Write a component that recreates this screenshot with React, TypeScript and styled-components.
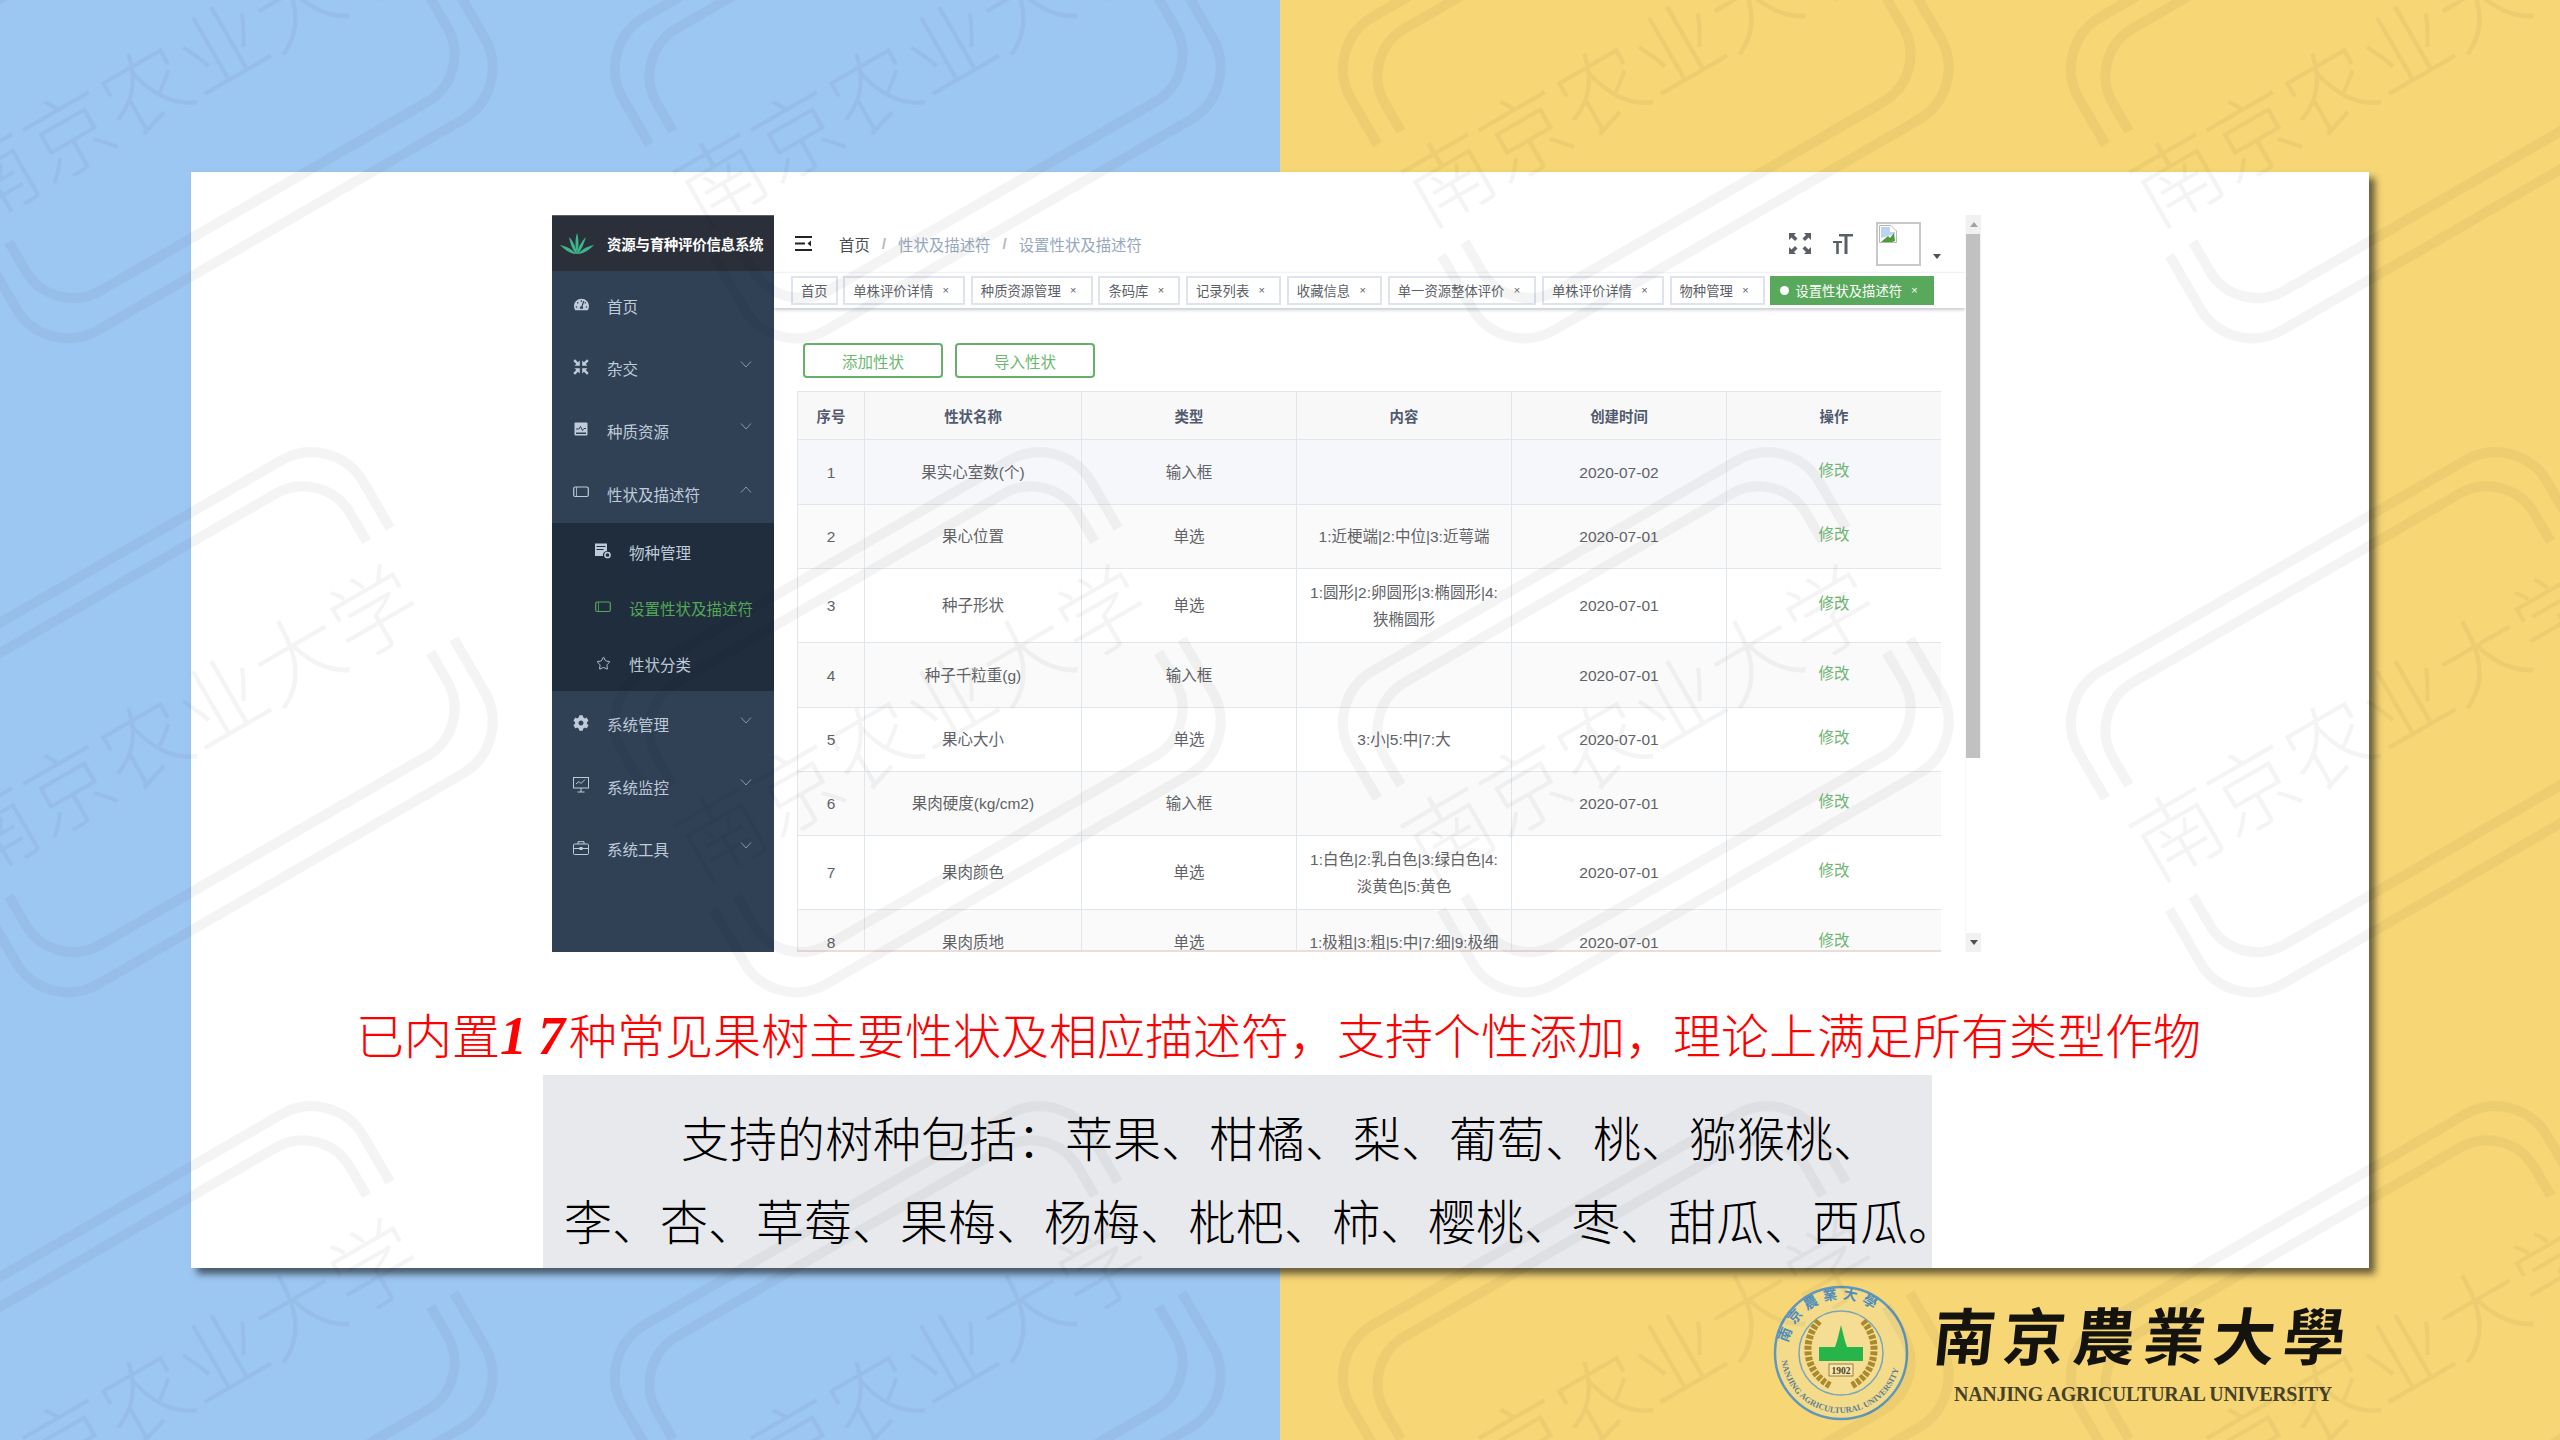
import React from 'react';
import styled, { createGlobalStyle } from 'styled-components';
import { Star } from 'lucide-react';
import { FaCog, FaTachometerAlt } from 'react-icons/fa';

const UI_FONT = `"Liberation Sans", "Noto Sans CJK SC", sans-serif`;
const CJK_FONT = `"Noto Sans CJK SC", sans-serif`;

const GlobalStyle = createGlobalStyle`
  html, body { margin: 0; padding: 0; background: #fff; }
  * { box-sizing: border-box; }
`;

const Page = styled.div`
  position: relative;
  width: 2560px;
  height: 1440px;
  padding: 172px 0 0 191px;
  overflow: hidden;
  font-family: ${UI_FONT};
  background: linear-gradient(90deg, #9dc7f3 50%, #f7d675 50%);
`;

const Slide = styled.div`
  width: 2178px;
  height: 1096px;
  display: flex;
  flex-direction: column;
  background: #fff;
  box-shadow: 6px 6px 7px rgba(20, 20, 20, 0.62);
`;

const AppFrame = styled.div`
  display: flex;
  width: 1429px;
  height: 737px;
  margin: 43px 0 0 361px;
  flex-shrink: 0;
`;

/* sidebar */
const Sidebar = styled.aside`
  width: 222px;
  display: flex;
  flex-direction: column;
  background: #304156;
  border-top: 1px solid #5c5f68;
`;

const Brand = styled.div`
  height: 55px;
  display: flex;
  align-items: center;
  padding-left: 8px;
  margin-bottom: 2px;
  background: #2b2f3a;
`;

const BrandTitle = styled.span`
  margin-left: 13px;
  font-family: ${CJK_FONT};
  font-size: 14.5px;
  font-weight: 700;
  letter-spacing: -0.02em;
  color: #fff;
  white-space: nowrap;
`;

const MenuRow = styled.div<{ $sub?: boolean; $active?: boolean }>`
  height: ${p => (p.$sub ? 56 : 62.6)}px;
  display: flex;
  align-items: center;
  padding-left: ${p => (p.$sub ? 43 : 21)}px;
  color: ${p => (p.$active ? '#55a858' : '#bfcbd9')};
`;

const MenuIcon = styled.span`
  width: 16px;
  height: 16px;
  display: flex;
  align-items: center;
  justify-content: center;
  flex-shrink: 0;
`;

const MenuLabel = styled.span<{ $sub?: boolean }>`
  margin-left: 18px;
  padding-top: ${p => (p.$sub ? 2 : 3)}px;
  font-family: ${CJK_FONT};
  font-size: 15.5px;
  white-space: nowrap;
`;

const Chevron = styled.svg`
  width: 12px;
  height: 7px;
  margin: -5px 22px 0 auto;
  fill: none;
  stroke: #8a97a8;
  stroke-width: 1;
`;

const SubMenu = styled.div`
  background: #1f2d3d;
`;

/* main column */
const Main = styled.main`
  width: 1191px;
  display: flex;
  flex-direction: column;
`;

const Navbar = styled.header`
  height: 57px;
  display: flex;
  align-items: center;
  padding: 0 24px 0 21px;
  flex-shrink: 0;
`;

const Breadcrumb = styled.nav`
  display: flex;
  align-items: center;
  margin-left: 27px;
  font-family: ${CJK_FONT};
  font-size: 15.4px;
`;

const Crumb = styled.span<{ $home?: boolean }>`
  color: ${p => (p.$home ? '#4a4d52' : '#97a8be')};
`;

const CrumbSlash = styled.span`
  margin: 0 12px;
  color: #b4b8bf;
  font-family: ${UI_FONT};
  font-weight: 700;
`;

const NavTools = styled.div`
  display: flex;
  align-items: center;
  gap: 22px;
  margin-left: auto;
`;

const ToolIcon = styled.svg`
  fill: #5a5e66;
  flex-shrink: 0;
`;

const Avatar = styled.div`
  width: 45px;
  height: 44px;
  margin-left: 1px;
  padding: 1px;
  border: 2px solid #c9c9c9;
`;

const Caret = styled.span`
  width: 0;
  height: 0;
  margin: 26px 0 0 -10px;
  border-left: 4px solid transparent;
  border-right: 4px solid transparent;
  border-top: 5px solid #4d5058;
`;

const TagBar = styled.div`
  height: 36px;
  display: flex;
  align-items: center;
  gap: 5.6px;
  padding: 0 0 1px 17px;
  flex-shrink: 0;
  border-top: 1px solid #f2f2f2;
  box-shadow: 0 2px 3px rgba(0, 21, 41, 0.22);
`;

const Tag = styled.span<{ $active?: boolean }>`
  height: 29px;
  display: inline-flex;
  align-items: center;
  padding: 0 8px;
  font-family: ${CJK_FONT};
  font-size: 13.33px;
  white-space: nowrap;
  color: ${p => (p.$active ? '#fff' : '#5c5f66')};
  background: ${p => (p.$active ? '#59a95c' : '#fff')};
  border: 2px solid ${p => (p.$active ? '#59a95c' : '#dfe3ee')};
`;

const TagDot = styled.i`
  width: 9px;
  height: 9px;
  margin-right: 6px;
  border-radius: 50%;
  background: #fff;
`;

const TagClose = styled.span`
  width: 7px;
  margin: 0 6px 0 9px;
  font-family: ${UI_FONT};
  font-size: 11px;
  line-height: 1;
  text-align: center;
`;

const Content = styled.section`
  flex: 1;
  min-height: 0;
  display: flex;
  flex-direction: column;
  padding: 35px 24px 0 23px;
`;

const ButtonRow = styled.div`
  display: flex;
  gap: 12px;
  margin: 0 0 13px 6px;
  flex-shrink: 0;
`;

const OutlineButton = styled.button`
  width: 140px;
  height: 35px;
  padding: 0;
  font-family: ${CJK_FONT};
  font-size: 15.5px;
  color: #6db871;
  background: #fff;
  border: 2px solid #66b06a;
  border-radius: 4px;
`;

const TableClip = styled.div`
  flex: 1;
  min-height: 0;
  overflow: hidden;
  border-bottom: 2px solid #eaddda;
`;

const Table = styled.table`
  width: 1144px;
  table-layout: fixed;
  border-collapse: collapse;
  font-size: 15.5px;
  color: #606266;
`;

const HeadCell = styled.th`
  height: 48px;
  padding: 0;
  font-size: 14.4px;
  font-weight: 700;
  color: #515a6e;
  background: #f8f8f9;
  border: 1.5px solid #dfe6ec;
`;

const Row = styled.tr<{ $hover?: boolean; $striped?: boolean; $h: number }>`
  height: ${p => p.$h}px;
  background: ${p => (p.$hover ? '#f5f7fa' : p.$striped ? '#fafafa' : '#fff')};
`;

const Cell = styled.td`
  padding: 0 10px;
  text-align: center;
  line-height: 27px;
  white-space: pre-line;
  border: 1.5px solid #dfe6ec;
`;

const EditLink = styled.a`
  position: relative;
  top: -2px;
  color: #6fb573;
`;

/* scrollbar */
const ScrollTrack = styled.div`
  width: 16px;
  display: flex;
  flex-direction: column;
  background: #f1f1f1;
  border-left: 1px solid #f8f8f8;
`;

const ScrollButton = styled.div`
  height: 19px;
  display: flex;
  align-items: center;
  justify-content: center;
  flex-shrink: 0;
`;

const ScrollThumb = styled.div`
  height: 524px;
  margin: 0 1px 0 0;
  background: #c1c1c1;
`;

const ScrollArrow = styled.span<{ $down?: boolean }>`
  width: 0;
  height: 0;
  border-left: 4px solid transparent;
  border-right: 4px solid transparent;
  border-bottom: ${p => (p.$down ? 'none' : '5px solid #a3a3a3')};
  border-top: ${p => (p.$down ? '5px solid #505050' : 'none')};
`;

const ScrollSpacer = styled.div`
  flex: 1;
  background: #fff;
`;

/* slide text */
const Caption = styled.p`
  height: 123px;
  margin: 0;
  padding: 43px 0 0 165px;
  flex-shrink: 0;
  font-family: ${CJK_FONT};
  font-size: 48px;
  font-weight: 300;
  line-height: 77px;
  color: #f00;
  white-space: nowrap;
`;

const CaptionNumber = styled.span`
  margin-right: -7px;
  font-family: "Liberation Serif", serif;
  font-size: 54px;
  font-style: italic;
  font-weight: 700;
  letter-spacing: 11px;
`;

const NoteBox = styled.div`
  width: 1389px;
  height: 193px;
  margin-left: 352px;
  padding-top: 20px;
  flex-shrink: 0;
  background: #e8e9ed;
`;

const NoteLine = styled.div<{ $indent: number }>`
  height: 83px;
  padding-left: ${p => p.$indent}px;
  font-family: ${CJK_FONT};
  font-size: 48px;
  font-weight: 300;
  line-height: 83px;
  color: #000;
  white-space: nowrap;
`;

/* university logo under the slide */
const Footer = styled.div`
  display: flex;
  align-items: flex-start;
  margin: 17px 0 0 1582px;
`;

const FooterText = styled.div`
  margin: 6px 0 0 25px;
  display: flex;
  flex-direction: column;
`;

const FooterTitle = styled.div`
  height: 84px;
  font-family: "Noto Sans CJK TC", sans-serif;
  font-size: 62px;
  font-weight: 700;
  line-height: 84px;
  letter-spacing: 8px;
  color: #15130d;
  white-space: nowrap;
  transform: skewX(-6deg);
`;

const FooterEnglish = styled.div`
  margin: 7px 0 0 20px;
  font-family: "Liberation Serif", serif;
  font-size: 20px;
  font-weight: 700;
  line-height: 24px;
  letter-spacing: -0.3px;
  color: #45422c;
  white-space: nowrap;
`;

/* faint tiled mark on top of the whole page */
const WatermarkLayer = styled.svg`
  position: absolute;
  inset: 0;
  width: 2560px;
  height: 1440px;
  pointer-events: none;
`;

const WatermarkText = styled.text`
  font-family: ${CJK_FONT};
  font-size: 88px;
  font-weight: 300;
  text-anchor: middle;
  fill: #000;
  fill-opacity: 0.045;
`;

const bracketPath = (l: number, r: number, v: number, gap: number, radius: number) => {
  const sweep = v < 0 ? 0 : 1;
  const bend = v < 0 ? v + radius : v - radius;
  return `M${r} ${gap} L${r} ${bend} A${radius} ${radius} 0 0 ${sweep} ${r - radius} ${v} L${l + radius} ${v} A${radius} ${radius} 0 0 ${sweep} ${l} ${bend} L${l} ${gap}`;
};

const Watermark = () => (
  <WatermarkLayer viewBox="0 0 2560 1440">
    <defs>
      <pattern id="nau-mark" x="-179" y="398" width="728" height="654" patternUnits="userSpaceOnUse">
        <g transform="translate(364 327) rotate(-30)">
          <g fill="none" stroke="#000" strokeOpacity="0.045" strokeWidth="10">
            <path d={bracketPath(-265, 276, -181, -68, 60)} />
            <path d={bracketPath(-265, 276, 181, 60, 60)} />
            <path d={bracketPath(-238, 249, -155, -68, 55)} />
            <path d={bracketPath(-238, 249, 148, 60, 55)} />
          </g>
          <WatermarkText x="0" y="30">南京农业大学</WatermarkText>
        </g>
      </pattern>
    </defs>
    <rect width="2560" height="1440" fill="url(#nau-mark)" />
  </WatermarkLayer>
);

const LeafLogo = () => (
  <svg width="34" height="22" viewBox="0 0 34 22" fill="#3fb48a">
    <path d="M17 21 C15 14 15 6 17 0 C19 6 19 14 17 21Z" />
    <path d="M16 21 C12 16 10 10 9 4 C13 8 16 14 17 21Z" />
    <path d="M18 21 C22 16 24 10 26 4 C22 8 18 14 17 21Z" />
    <path d="M15 21 C9 20 4 16 0 12 C6 13 12 16 16 21Z" />
    <path d="M19 21 C25 20 30 16 34 12 C28 13 22 16 18 21Z" />
  </svg>
);

const CompressIcon = () => (
  <svg width="16" height="16" viewBox="0 0 16 16" fill="currentColor">
    <path d="M6.800 6.800 L6.800 1.500 L5 3.300 L2 0.300 L0.300 2 L3.300 5 L1.500 6.800Z" />
    <path d="M9.200 6.800 L9.200 1.500 L11 3.300 L14 0.300 L15.700 2 L12.700 5 L14.500 6.800Z" />
    <path d="M6.800 9.200 L6.800 14.500 L5 12.700 L2 15.700 L0.300 14 L3.300 11 L1.500 9.200Z" />
    <path d="M9.200 9.200 L9.200 14.500 L11 12.700 L14 15.700 L15.700 14 L12.700 11 L14.500 9.200Z" />
  </svg>
);

const ResourceIcon = () => (
  <svg width="14" height="14" viewBox="0 0 14 14">
    <rect x="0.500" y="0.500" width="13" height="13" rx="1" fill="currentColor" />
    <path d="M2 7 L5 7 L6.500 4.500 L8.500 8.500 L10 6.500 L12 6.500" fill="none" stroke="#304156" strokeWidth="1" />
    <rect x="2" y="10.500" width="10" height="1.500" fill="#304156" />
  </svg>
);

const FrameIcon = () => (
  <svg width="16" height="12" viewBox="0 0 16 12" fill="none" stroke="currentColor" strokeWidth="1.2">
    <rect x="0.700" y="1" width="14.600" height="9.500" rx="1.500" />
    <path d="M3.500 1 L3.500 10.500" strokeWidth="0.800" />
  </svg>
);

const SpeciesIcon = () => (
  <svg width="16" height="16" viewBox="0 0 16 16" fill="currentColor">
    <path d="M0 0.500 H12 V8 A4 4 0 0 0 8 13 H0Z" />
    <rect x="1.500" y="3" width="9" height="1" fill="#1f2d3d" />
    <rect x="1.500" y="6" width="7" height="1" fill="#1f2d3d" />
    <circle cx="12.500" cy="12" r="2.600" fill="none" stroke="currentColor" strokeWidth="1.500" />
  </svg>
);

const MonitorIcon = () => (
  <svg width="16" height="16" viewBox="0 0 16 16" fill="none" stroke="currentColor" strokeWidth="1">
    <rect x="0.500" y="0.500" width="15" height="10.500" />
    <path d="M3 7 L6 4.500 L8 6.500 L12 2.500" />
    <path d="M8 11 V15 M4.500 15 H11.500" />
  </svg>
);

const BriefcaseIcon = () => (
  <svg width="16" height="14" viewBox="0 0 16 14" fill="none" stroke="currentColor" strokeWidth="1">
    <rect x="0.500" y="3" width="15" height="10.500" rx="1" />
    <path d="M5 3 V0.700 H11 V3 M0.500 7.500 H15.500" />
    <rect x="7" y="6.500" width="2" height="2" fill="currentColor" />
  </svg>
);

const HamburgerIcon = () => (
  <svg width="17" height="15" viewBox="0 0 17 15" fill="#222">
    <rect width="17" height="2" />
    <rect y="6.500" width="10" height="2" />
    <rect y="13" width="17" height="2" />
    <path d="M16 4.500 V10.500 L12.500 7.500Z" />
  </svg>
);

const FullscreenIcon = () => (
  <ToolIcon width="22" height="21" viewBox="0 0 22 21">
    <path d="M0 0 H7 L5 2 L8.500 5.500 L6 8 L2.500 4.500 L0 7Z" />
    <path d="M22 0 H15 L17 2 L13.500 5.500 L16 8 L19.500 4.500 L22 7Z" />
    <path d="M0 21 H7 L5 19 L8.500 15.500 L6 13 L2.500 16.500 L0 14Z" />
    <path d="M22 21 H15 L17 19 L13.500 15.500 L16 13 L19.500 16.500 L22 14Z" />
  </ToolIcon>
);

const SizeIcon = () => (
  <ToolIcon width="20" height="20" viewBox="0 0 20 20">
    <path d="M6 0 H20 V2.500 H14.500 V20 H11.500 V2.500 H6Z" />
    <path d="M0 7 H9 V9 H5.800 V20 H3.200 V9 H0Z" />
  </ToolIcon>
);

const BrokenImageIcon = () => (
  <svg width="18" height="18" viewBox="0 0 18 18">
    <path d="M0.500 0.500 H12 L17.500 6 V17.500 H0.500Z" fill="#fff" stroke="#b8b8b8" />
    <path d="M2 2 H11 V7 H16 V9 L2 13Z" fill="#bcd4f2" />
    <path d="M2 17 L9 11 L11 13 L15 8 L16 16 L13 17Z" fill="#4f9a3a" />
  </svg>
);

const DownChevron = ({ up }: { up?: boolean }) => (
  <Chevron viewBox="0 0 12 7">
    <polyline points={up ? '1,6.500 6,1 11,6.500' : '1,0.500 6,6 11,0.500'} />
  </Chevron>
);

const Seal = () => (
  <svg width="136" height="136" viewBox="0 0 136 136">
    <defs>
      <path id="seal-top" d="M14 68 A54 54 0 0 1 122 68" />
      <path id="seal-bottom" d="M8 68 A60 60 0 0 0 128 68" />
    </defs>
    <circle cx="68" cy="68" r="66" fill="#f4db8a" stroke="#5f97bd" strokeWidth="2.500" />
    <circle cx="68" cy="68" r="42" fill="#f5de94" stroke="#7aa5b8" strokeWidth="1.500" />
    <text fill="#4e8dbb" fontFamily='"Noto Sans CJK TC", sans-serif' fontSize="14" fontWeight="700" letterSpacing="5">
      <textPath href="#seal-top" startOffset="6%">南京農業大學</textPath>
    </text>
    <text fill="#5b7f95" fontFamily='"Liberation Serif", serif' fontSize="8.500" fontWeight="700">
      <textPath href="#seal-bottom" startOffset="4%">NANJING AGRICULTURAL UNIVERSITY</textPath>
    </text>
    <g fill="none" stroke="#a98a2c" strokeWidth="7" strokeDasharray="4 1.500">
      <path d="M46 36 C28 56 32 88 58 101" />
      <path d="M90 36 C108 56 104 88 78 101" />
    </g>
    <path d="M68 40 L72 56 L74 62 L90 62 L90 76 L46 76 L46 62 L62 62 L64 56Z" fill="#27b54b" />
    <rect x="56" y="79" width="24" height="12" fill="#f7e6ae" stroke="#7d6a2a" strokeWidth="0.800" />
    <text x="68" y="88.500" textAnchor="middle" fontFamily='"Liberation Serif", serif' fontSize="9.500" fontWeight="700" fill="#4a4320">1902</text>
  </svg>
);

const TAGS = [
  { label: '首页', home: true },
  { label: '单株评价详情' },
  { label: '种质资源管理' },
  { label: '条码库' },
  { label: '记录列表' },
  { label: '收藏信息' },
  { label: '单一资源整体评价' },
  { label: '单株评价详情' },
  { label: '物种管理' },
  { label: '设置性状及描述符', active: true },
];

const ROWS = [
  { name: '果实心室数(个)', type: '输入框', content: '', date: '2020-07-02', h: 65 },
  { name: '果心位置', type: '单选', content: '1:近梗端|2:中位|3:近萼端', date: '2020-07-01', h: 64 },
  { name: '种子形状', type: '单选', content: '1:圆形|2:卵圆形|3:椭圆形|4:\n狭椭圆形', date: '2020-07-01', h: 74 },
  { name: '种子千粒重(g)', type: '输入框', content: '', date: '2020-07-01', h: 65 },
  { name: '果心大小', type: '单选', content: '3:小|5:中|7:大', date: '2020-07-01', h: 64 },
  { name: '果肉硬度(kg/cm2)', type: '输入框', content: '', date: '2020-07-01', h: 64 },
  { name: '果肉颜色', type: '单选', content: '1:白色|2:乳白色|3:绿白色|4:\n淡黄色|5:黄色', date: '2020-07-01', h: 74 },
  { name: '果肉质地', type: '单选', content: '1:极粗|3:粗|5:中|7:细|9:极细', date: '2020-07-01', h: 66 },
];

const COLUMNS = [67, 217, 215, 215, 215, 215];
const HEADERS = ['序号', '性状名称', '类型', '内容', '创建时间', '操作'];

// full-width punctuation, as on the slide
const COMMA = '\uFF0C';
const COLON = '\uFF1A';

export default function App() {
  return (
    <Page>
      <GlobalStyle />
      <Slide>
        <AppFrame>
          <Sidebar>
            <Brand>
              <LeafLogo />
              <BrandTitle>资源与育种评价信息系统</BrandTitle>
            </Brand>
            <MenuRow>
              <MenuIcon><FaTachometerAlt size={15} /></MenuIcon>
              <MenuLabel>首页</MenuLabel>
            </MenuRow>
            <MenuRow>
              <MenuIcon><CompressIcon /></MenuIcon>
              <MenuLabel>杂交</MenuLabel>
              <DownChevron />
            </MenuRow>
            <MenuRow>
              <MenuIcon><ResourceIcon /></MenuIcon>
              <MenuLabel>种质资源</MenuLabel>
              <DownChevron />
            </MenuRow>
            <MenuRow>
              <MenuIcon><FrameIcon /></MenuIcon>
              <MenuLabel>性状及描述符</MenuLabel>
              <DownChevron up />
            </MenuRow>
            <SubMenu>
              <MenuRow $sub>
                <MenuIcon><SpeciesIcon /></MenuIcon>
                <MenuLabel $sub>物种管理</MenuLabel>
              </MenuRow>
              <MenuRow $sub $active>
                <MenuIcon><FrameIcon /></MenuIcon>
                <MenuLabel $sub>设置性状及描述符</MenuLabel>
              </MenuRow>
              <MenuRow $sub>
                <MenuIcon><Star size={15} strokeWidth={1.5} /></MenuIcon>
                <MenuLabel $sub>性状分类</MenuLabel>
              </MenuRow>
            </SubMenu>
            <MenuRow>
              <MenuIcon><FaCog size={16} /></MenuIcon>
              <MenuLabel>系统管理</MenuLabel>
              <DownChevron />
            </MenuRow>
            <MenuRow>
              <MenuIcon><MonitorIcon /></MenuIcon>
              <MenuLabel>系统监控</MenuLabel>
              <DownChevron />
            </MenuRow>
            <MenuRow>
              <MenuIcon><BriefcaseIcon /></MenuIcon>
              <MenuLabel>系统工具</MenuLabel>
              <DownChevron />
            </MenuRow>
          </Sidebar>

          <Main>
            <Navbar>
              <HamburgerIcon />
              <Breadcrumb>
                <Crumb $home>首页</Crumb>
                <CrumbSlash>/</CrumbSlash>
                <Crumb>性状及描述符</Crumb>
                <CrumbSlash>/</CrumbSlash>
                <Crumb>设置性状及描述符</Crumb>
              </Breadcrumb>
              <NavTools>
                <FullscreenIcon />
                <SizeIcon />
                <Avatar><BrokenImageIcon /></Avatar>
                <Caret />
              </NavTools>
            </Navbar>
            <TagBar>
              {TAGS.map((tag, i) => (
                <Tag key={i} $active={tag.active}>
                  {tag.active && <TagDot />}
                  {tag.label}
                  {!tag.home && <TagClose>×</TagClose>}
                </Tag>
              ))}
            </TagBar>
            <Content>
              <ButtonRow>
                <OutlineButton>添加性状</OutlineButton>
                <OutlineButton>导入性状</OutlineButton>
              </ButtonRow>
              <TableClip>
                <Table>
                  <colgroup>
                    {COLUMNS.map((w, i) => <col key={i} width={w} />)}
                  </colgroup>
                  <thead>
                    <tr>
                      {HEADERS.map(h => <HeadCell key={h}>{h}</HeadCell>)}
                    </tr>
                  </thead>
                  <tbody>
                    {ROWS.map((row, i) => (
                      <Row key={i} $h={row.h} $hover={i === 0} $striped={i % 2 === 1}>
                        <Cell>{i + 1}</Cell>
                        <Cell>{row.name}</Cell>
                        <Cell>{row.type}</Cell>
                        <Cell>{row.content}</Cell>
                        <Cell>{row.date}</Cell>
                        <Cell><EditLink>修改</EditLink></Cell>
                      </Row>
                    ))}
                  </tbody>
                </Table>
              </TableClip>
            </Content>
          </Main>

          <ScrollTrack>
            <ScrollButton><ScrollArrow /></ScrollButton>
            <ScrollThumb />
            <ScrollSpacer />
            <ScrollButton><ScrollArrow $down /></ScrollButton>
          </ScrollTrack>
        </AppFrame>

        <Caption>
          已内置<CaptionNumber>17</CaptionNumber>{`种常见果树主要性状及相应描述符${COMMA}支持个性添加${COMMA}理论上满足所有类型作物`}
        </Caption>
        <NoteBox>
          <NoteLine $indent={138}>{`支持的树种包括${COLON}苹果、柑橘、梨、葡萄、桃、猕猴桃、`}</NoteLine>
          <NoteLine $indent={21}>李、杏、草莓、果梅、杨梅、枇杷、柿、樱桃、枣、甜瓜、西瓜。</NoteLine>
        </NoteBox>
      </Slide>

      <Footer>
        <Seal />
        <FooterText>
          <FooterTitle>南京農業大學</FooterTitle>
          <FooterEnglish>NANJING AGRICULTURAL UNIVERSITY</FooterEnglish>
        </FooterText>
      </Footer>

      <Watermark />
    </Page>
  );
}
